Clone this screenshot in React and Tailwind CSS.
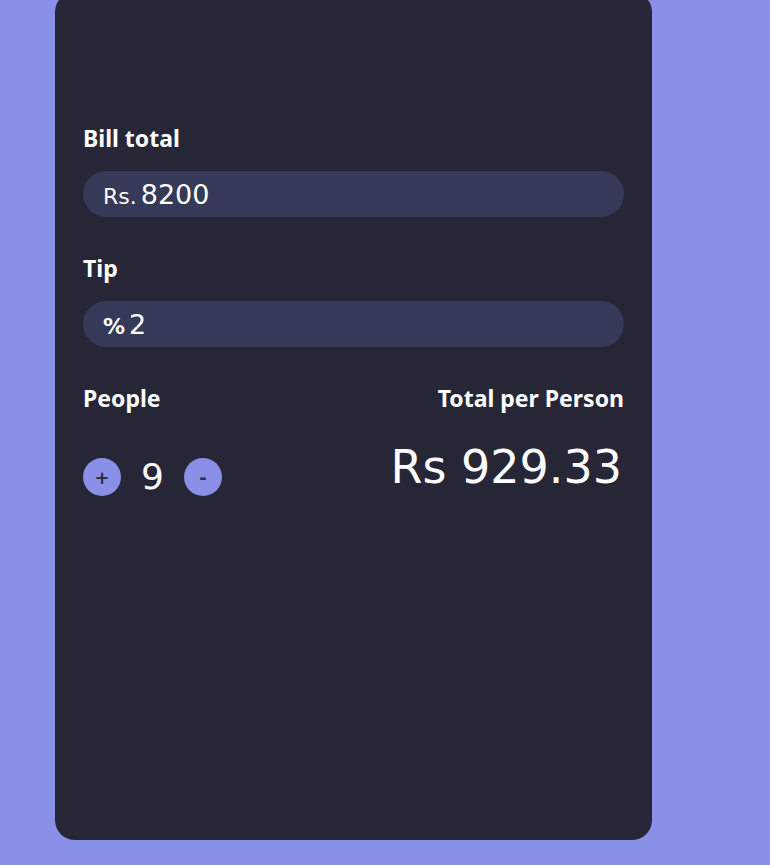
import React, { useState } from 'react';

const labelFont = { fontFamily: '"Noto Sans", "Open Sans", sans-serif' };

function Field({ label, prefix, prefixClass, value, className }) {
    return (
        <div className={className}>
            <label style={labelFont} className="block text-[23px] leading-[30px] font-bold text-white">
                {label}
            </label>
            <div className="mt-[18px] h-[46px] flex items-center pl-5 pr-5 rounded-full bg-[#363958] text-white">
                <div className="flex items-baseline gap-1">
                    <span className={prefixClass}>{prefix}</span>
                    <span className="text-[27px] leading-none">{value}</span>
                </div>
            </div>
        </div>
    );
}

export default function App() {
    const [people, setPeople] = useState(9);
    const bill = 8200;
    const tip = 2;
    const perPerson = ((bill * (1 + tip / 100)) / people).toFixed(2);

    return (
        <div
            className="min-h-[865px] bg-[#8a8fe8] overflow-hidden"
            style={{ fontFamily: '"DejaVu Sans", "Noto Sans", sans-serif' }}
        >
            <div className="ml-[55px] -mt-2 w-[597px] h-[848px] rounded-[20px] bg-[#272637] px-7 pt-[131px]">
                <Field label="Bill total" prefix="Rs." prefixClass="text-[22px] leading-none" value={bill} />
                <Field
                    label="Tip"
                    prefix="%"
                    prefixClass="text-[22px] leading-none font-bold"
                    value={tip}
                    className="mt-[36px]"
                />

                <div className="mt-[36px] flex justify-between">
                    <div>
                        <p style={labelFont} className="text-[23px] leading-[30px] font-bold text-white">
                            People
                        </p>
                        <div className="mt-[45px] flex items-center gap-5">
                            <button
                                onClick={() => setPeople(people + 1)}
                                className="w-[38px] h-[38px] rounded-full bg-[#8a8fe8] text-[#2e2d48] text-[18px] font-bold flex items-center justify-center"
                            >
                                +
                            </button>
                            <span className="text-[36px] leading-none text-white">{people}</span>
                            <button
                                onClick={() => setPeople(Math.max(1, people - 1))}
                                className="w-[38px] h-[38px] rounded-full bg-[#8a8fe8] text-[#2e2d48] text-[18px] font-bold flex items-center justify-center"
                            >
                                -
                            </button>
                        </div>
                    </div>
                    <div className="flex flex-col items-end">
                        <p style={labelFont} className="text-[23px] leading-[30px] font-bold text-white">
                            Total per Person
                        </p>
                        <p className="mt-[31px] text-[46px] leading-none text-white pr-[2px]">Rs {perPerson}</p>
                    </div>
                </div>
            </div>
        </div>
    );
}
